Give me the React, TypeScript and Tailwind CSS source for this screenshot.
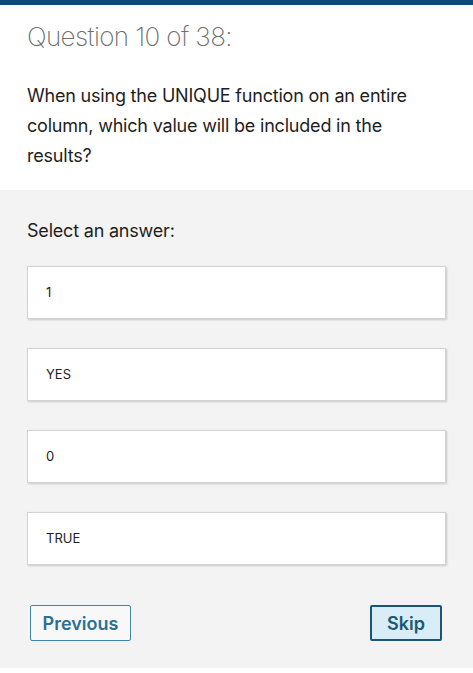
import React from 'react';

const answers = ['1', 'YES', '0', 'TRUE'];

export default function App() {
  return (
    <div className="w-[473px] h-[673px] bg-white font-['Inter','Liberation_Sans',sans-serif]">
      <div className="h-[5px] bg-[#0d4a7c]" />

      {/* Question */}
      <div className="px-[27px] pt-[14px] pb-[19px]">
        <h1 className="text-[26px] leading-[36px] font-extralight text-[#6e6e6e] tracking-[-0.6px]">
          Question 10 of 38:
        </h1>
        <p className="mt-[26px] text-[18px] leading-[30px] text-[#1e1e1e] tracking-[-0.2px]">
          When using the UNIQUE function on an entire column, which value will be included in the results?
        </p>
      </div>

      {/* Answers */}
      <div className="bg-[#f3f3f3] h-[478px] px-[27px] pt-[27px]">
        <div className="text-[18px] leading-[28px] text-[#1e1e1e] tracking-[-0.2px]">Select an answer:</div>
        <div className="mt-[21px] flex flex-col gap-[29px]">
          {answers.map((a) => (
            <button
              key={a}
              className="w-[419px] h-[53px] bg-white border border-[#d3d3d3] shadow-[1px_1px_2px_rgba(0,0,0,0.18)] text-left pl-[18px] text-[13px] text-[#1e1e1e]"
            >
              {a}
            </button>
          ))}
        </div>
        <div className="mt-[40px] flex justify-between pl-[3px] pr-[4px]">
          <button className="w-[101px] h-[36px] border-[1.5px] border-[#3f84aa] rounded-[2px] bg-[#f8f8f8] text-[18px] font-semibold text-[#2b6f95]">
            Previous
          </button>
          <button className="w-[72px] h-[36px] border-2 border-[#1b5576] rounded-[2px] bg-[#d9edf6] text-[18px] font-semibold text-[#1d5877]">
            Skip
          </button>
        </div>
      </div>
    </div>
  );
}
